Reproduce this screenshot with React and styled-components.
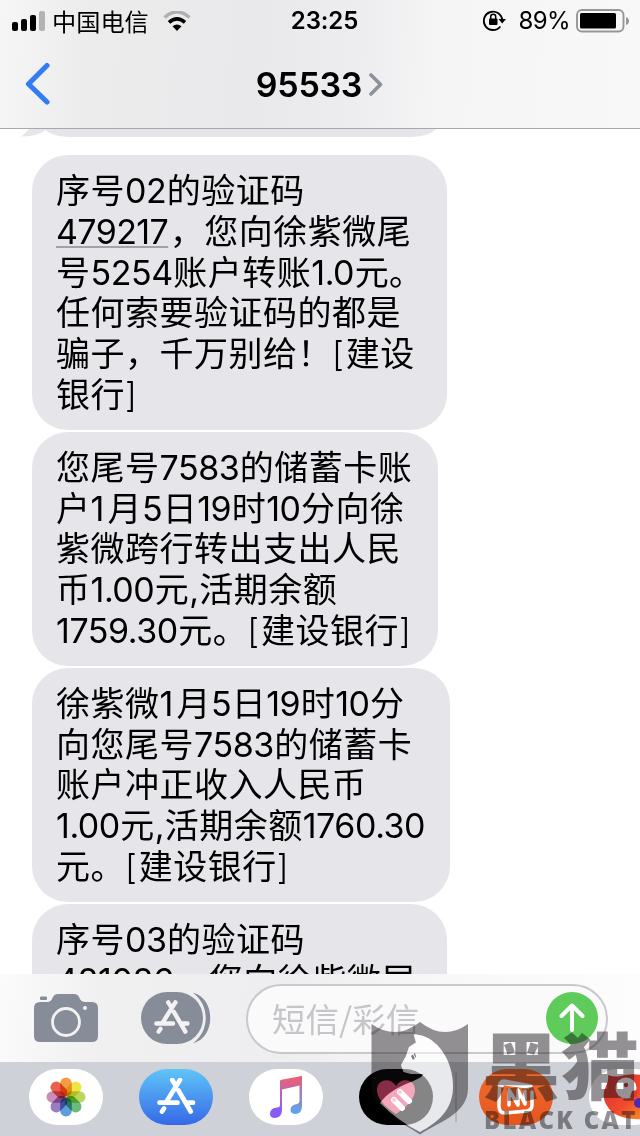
import styled, { createGlobalStyle } from "styled-components";

const BUBBLE = "#e5e5ea";
const BLUE = "#347cf6";
const GREY_ICON = "#868d98";
const MARK = "rgba(18, 14, 18, 0.45)";

const messages = [
  {
    id: 1,
    width: 415,
    lines: ["序号02的验证码", "479217，您向徐紫微尾", "号5254账户转账1.0元。", "任何索要验证码的都是", "骗子，千万别给！[建设", "银行]"],
  },
  {
    id: 2,
    width: 406,
    lines: ["您尾号7583的储蓄卡账", "户1月5日19时10分向徐", "紫微跨行转出支出人民", "币1.00元,活期余额", "1759.30元。[建设银行]"],
  },
  {
    id: 3,
    width: 418,
    lines: ["徐紫微1月5日19时10分", "向您尾号7583的储蓄卡", "账户冲正收入人民币", "1.00元,活期余额1760.30", "元。[建设银行]"],
  },
  {
    id: 4,
    width: 415,
    lines: ["序号03的验证码", "481086，您向徐紫微尾"],
  },
];

const petals = ["#f0922b", "#efe02f", "#b4d34a", "#58b56c", "#4c93d6", "#8f6fb8", "#c77fb0", "#e8503a"];

const TextLine = ({ text }) => (
  <Line>
    {text.split(/([\d.,]+|\[|\])/).filter(Boolean).map((part, i) => {
      if (part === "479217") return <Code key={i}>{part}</Code>;
      if (/[\d.,]/.test(part)) return <Digits key={i} $gap={part === "1" ? 3.5 : 0.5}>{part}</Digits>;
      if (/[[\]]/.test(part)) return <Bracket key={i}>{part}</Bracket>;
      return part;
    })}
  </Line>
);

const StoreGlyph = () => (
  <path
    d="M23 2L9.500 23.500M15.300 2L18.700 7.500M21.500 12.500L33.700 33.500M2.500 24.700H20.500M29 24.700H36M7 30.500L5 33.500"
    fill="none"
    stroke="currentColor"
    strokeWidth="4.700"
    strokeLinecap="round"
  />
);

const App = () => (
  <>
    <GlobalStyle />
    <Screen>
      <Header>
        <StatusBar>
          <Carrier>
            <svg width="34" height="20" viewBox="0 0 34 20">
              <rect x="0" y="11" width="6" height="9" rx="2" />
              <rect x="9" y="8" width="6" height="12" rx="2" />
              <rect x="18" y="4" width="6" height="16" rx="2" />
              <rect x="27" y="0" width="6" height="20" rx="2" fill="#b3b3b4" />
            </svg>
            <CarrierName>中国电信</CarrierName>
            <svg width="28" height="20" viewBox="0 0 28 20">
              <path d="M1.500 6.500Q14-4.500 26.500 6.500" fill="none" stroke="#b0b0b1" strokeWidth="3.600" />
              <path d="M6 11.300Q14 4.300 22 11.300" fill="none" stroke="#000" strokeWidth="3.600" />
              <path d="M9.500 15.300Q14 11.500 18.500 15.300L14 20Z" />
            </svg>
          </Carrier>
          <Clock>23:25</Clock>
          <Battery>
            <svg width="24" height="22" viewBox="0 0 24 22">
              <path d="M17.300 16.500A9.200 9.200 0 1 1 19.200 10" fill="none" stroke="#000" strokeWidth="1.900" />
              <path d="M15.500 9H23L19.200 13.400Z" />
              <rect x="6" y="8.500" width="8.500" height="6.500" rx="1" />
              <path d="M7.700 9V6.800A2.500 2.500 0 0 1 12.700 6.800V9" fill="none" stroke="#000" strokeWidth="1.500" />
            </svg>
            <Percent>89%</Percent>
            <svg width="54" height="24" viewBox="0 0 54 24">
              <rect x="1" y="1" width="46.500" height="21.500" rx="5" fill="none" stroke="#969697" strokeWidth="1.900" />
              <rect x="4" y="4" width="36" height="15.500" rx="1.500" />
              <path d="M50 8Q53 9 53 12Q53 15 50 16Z" fill="#969697" />
            </svg>
          </Battery>
        </StatusBar>
        <NavBar>
          <svg width="26" height="44" viewBox="0 0 26 44">
            <path d="M23 3.500L4.500 22L23 40" fill="none" stroke={BLUE} strokeWidth="5.200" strokeLinecap="round" strokeLinejoin="round" />
          </svg>
          <Contact>
            95533
            <svg width="14" height="23" viewBox="0 0 14 23">
              <path d="M2 2L11.500 11.500L2 21" fill="none" stroke="#8b929b" strokeWidth="3.600" strokeLinecap="round" strokeLinejoin="round" />
            </svg>
          </Contact>
        </NavBar>
      </Header>

      <Messages>
        <Earlier>
          <svg width="426" height="8" viewBox="0 0 426 8">
            <path d="M8 0H415Q407 8 389 8H52Q32 8 24.500 1Q15 8 0 7.500Q5 4 8 0Z" fill={BUBBLE} />
          </svg>
        </Earlier>
        {messages.map((message) => (
          <Bubble key={message.id} $width={message.width}>
            {message.lines.map((line) => (
              <TextLine key={line} text={line} />
            ))}
          </Bubble>
        ))}
      </Messages>

      <Composer>
        <svg width="64" height="48" viewBox="0 0 64 48">
          <rect x="6" y="2.500" width="7" height="3.500" rx="1" fill={GREY_ICON} />
          <path d="M6 8H13Q17 8 18.500 4Q20 0 24 0H40Q44 0 45.500 4Q47 8 51 8H58Q64 8 64 14V42Q64 48 58 48H6Q0 48 0 42V14Q0 8 6 8Z" fill={GREY_ICON} />
          <circle cx="32" cy="28" r="13.500" fill="none" stroke="#f2f2f3" strokeWidth="2.800" />
          <circle cx="51" cy="14" r="2" fill="#f2f2f3" />
        </svg>
        <StoreButton width="71" height="52" viewBox="0 0 71 52">
          <rect x="0" y="0" width="62" height="52" rx="26" fill={GREY_ICON} />
          <path d="M52 .8C75 6 75 46 52 51.200C69 39 69 13 52 .8Z" fill={GREY_ICON} />
          <g color="#f2f2f3" transform="translate(13 8.500) scale(.93)"><StoreGlyph /></g>
        </StoreButton>
        <Field>
          <Placeholder>短信/彩信</Placeholder>
          <Send>
            <svg width="26" height="30" viewBox="0 0 26 30">
              <path d="M13 27V3M2.500 13L13 2.500L23.500 13" fill="none" stroke="#fff" strokeWidth="4" strokeLinecap="round" strokeLinejoin="round" />
            </svg>
          </Send>
        </Field>
      </Composer>

      <Drawer>
        <AppPill $bg="#fff">
          <svg width="40" height="40" viewBox="-20 -20 40 40">
            {petals.map((color, i) => (
              <Petal key={color} x="-5.800" y="-19.500" width="11.600" height="19" rx="5.800" fill={color} transform={`rotate(${i * 45})`} />
            ))}
          </svg>
        </AppPill>
        <AppPill $bg="linear-gradient(#5fc5f7, #3569e8)">
          <svg width="39" height="37" viewBox="0 0 39 37" color="#fff"><StoreGlyph /></svg>
        </AppPill>
        <AppPill $bg="#fff">
          <svg width="34" height="44" viewBox="0 0 34 44">
            <defs>
              <linearGradient id="note" x1="0" y1="0" x2="0" y2="1">
                <stop offset="0" stopColor="#f0606a" />
                <stop offset=".5" stopColor="#b065c8" />
                <stop offset=".8" stopColor="#8b5cf5" />
                <stop offset="1" stopColor="#8b5cf5" />
              </linearGradient>
              <linearGradient id="noteRight" x1="0" y1="0" x2="0" y2="1">
                <stop offset="0" stopColor="#e95b70" />
                <stop offset="1" stopColor="#58a7f8" />
              </linearGradient>
            </defs>
            <path d="M11 6Q11 5 12.500 4.700L33 1V10L13 14.500V35Q13 42 6 43Q1 43 1 39Q1 33 8 32.500Q11 32 11 30Z" fill="url(#note)" />
            <path d="M30.500 1.500L33 1V31Q33 38 27 39Q21.500 39 21.500 35Q21.500 30 28 29Q30.500 28.500 30.500 26Z" fill="url(#noteRight)" />
          </svg>
        </AppPill>
        <AppPill $bg="#000">
          <svg width="40" height="36" viewBox="0 0 40 36">
            <path d="M20 35C14 31 1 22 1 11C1 0 15-2 20 7C25-2 39 0 39 11C39 22 26 31 20 35Z" fill="#e8456f" />
            <path d="M18 21L26 29M24 13L33 22" stroke="#fff" strokeWidth="6" strokeLinecap="round" />
            <circle cx="18" cy="21" r="2" fill="#f29bb3" />
            <circle cx="24" cy="13" r="2" fill="#f29bb3" />
          </svg>
        </AppPill>
        <Divider />
        <AppPill $bg="linear-gradient(#ef6c2e, #e4561f)">
          <svg width="40" height="40" viewBox="0 0 40 40" fill="none" stroke="#fff" strokeWidth="3.500" strokeLinejoin="round" strokeLinecap="round">
            <path d="M35 9L8 4Q4 4 3.500 9L3 29Q3 36 9 36L31 34Q36 33 36 28V15M6 9Q6 6 10 7L32 10" />
            <path d="M13 28V13L22 28V13L29 27V14" strokeWidth="3.500" />
          </svg>
        </AppPill>
        <AppPill $bg="#fff">
          <Flame width="60" height="46" viewBox="0 0 60 46">
            <defs>
              <linearGradient id="flame" x1="0" y1="0" x2="1" y2="1">
                <stop offset="0" stopColor="#df2b34" />
                <stop offset=".55" stopColor="#f04b2c" />
                <stop offset="1" stopColor="#f7a62a" />
              </linearGradient>
            </defs>
            <path d="M5 1Q13 4 22 1Q44-3 52 12V43Q28 49 10 39Q-4 26 3 12Q6 7 5 1Z" fill="url(#flame)" />
            <circle cx="23" cy="14" r="10.500" fill="#fff" />
            <circle cx="23" cy="11" r="2.200" fill="#d8333a" />
            <path d="M27 23L29 17L34 16V23Z" fill="#de3c37" />
            <circle cx="36" cy="29" r="5" fill="#4b2bb5" />
          </Flame>
        </AppPill>
      </Drawer>

      <Watermark>
        <svg width="98" height="114" viewBox="371 1022 98 114">
          <path
            d="M371.500 1024Q396 1041 420 1022Q444 1041 468 1024V1088C468 1114 440 1121 420 1134.500C402 1122 371.500 1111 371.500 1084ZM413.500 1034L416 1042.500L409 1047L406 1056L401 1065L403.500 1072L411 1074L423.500 1074C420 1082 395 1083 380 1103Q398 1121 420 1132C438 1122 453 1110 453 1086C453 1060 437 1038 419 1035Z"
            fill={MARK}
            fillRule="evenodd"
          />
          <path d="M413.500 1034L416 1042.500L409 1047L406 1056L401 1065L403.500 1072L411 1074L423.500 1074C420 1082 395 1083 380 1103Q398 1121 420 1132C438 1122 453 1110 453 1086C453 1060 437 1038 419 1035Z" fill="rgba(255,255,255,.52)" />
          <path d="M411 1056L415 1053L416 1057L413 1060Z" fill="#77777b" />
          <path d="M413 1053.500L415 1058" stroke="#fff" strokeWidth="1" />
        </svg>
        <Brand>
          <BrandName>黑猫</BrandName>
          <BrandLatin>BLACK CAT</BrandLatin>
        </Brand>
      </Watermark>
    </Screen>
  </>
);

export default App;

const GlobalStyle = createGlobalStyle`
  body {
    margin: 0;
    background: #fff;
    color: #000;
    font-family: "Inter", "Noto Sans CJK SC", sans-serif;
  }
  svg {
    display: block;
    flex: none;
  }
`;

const Screen = styled.div`
  position: relative;
  display: flex;
  flex-direction: column;
  width: 640px;
  height: 1136px;
  overflow: hidden;
`;

const Header = styled.header`
  box-sizing: border-box;
  height: 129px;
  flex: none;
  border-bottom: 1px solid #a9a9ad;
  background: linear-gradient(93deg, #f6f6f6 0%, #ececed 14%, #e9e9eb 40%, #ededef 56%, #f5f5f6 68%, #f8f8f8 100%);
`;

const StatusBar = styled.div`
  display: grid;
  grid-template-columns: 1fr auto 1fr;
  align-items: center;
  height: 40px;
  padding: 0 10px 0 12px;
`;

const Carrier = styled.div`
  display: flex;
  align-items: center;
`;

const CarrierName = styled.span`
  margin: 0 14px 0 6px;
  font: 400 24.200px/40px "Noto Sans CJK SC", sans-serif;
`;

const Clock = styled.span`
  padding: 1px 0 0 7px;
  font-size: 24px;
  font-weight: 600;
  line-height: 40px;
  letter-spacing: -0.1px;
`;

const Battery = styled.div`
  display: flex;
  align-items: center;
  justify-content: flex-end;
  padding-top: 1px;
`;

const Percent = styled.span`
  margin: 0 6px 0 12px;
  font-size: 24px;
  line-height: 40px;
  letter-spacing: -0.6px;
`;

const NavBar = styled.div`
  display: grid;
  grid-template-columns: 26px 1fr 26px;
  align-items: center;
  height: 88px;
  padding: 0 25px 0 24px;
`;

const Contact = styled.div`
  display: flex;
  align-items: center;
  justify-content: center;
  gap: 7px;
  font-size: 34px;
  font-weight: 600;
  letter-spacing: -0.3px;
`;

const Messages = styled.main`
  display: flex;
  flex: 1;
  flex-direction: column;
  gap: 2px;
  min-height: 0;
  padding-left: 32px;
  overflow: hidden;
`;

const Earlier = styled.div`
  flex: none;
  height: 8px;
  margin: 0 0 16px -11px;
`;

const Bubble = styled.div`
  box-sizing: border-box;
  flex: none;
  width: ${(props) => props.$width}px;
  padding: 14px 0 16px 24px;
  border-radius: 36px;
  background: ${BUBBLE};
`;

const Line = styled.div`
  height: 40.800px;
  font: 400 34px/40.800px "Noto Sans CJK SC", sans-serif;
  letter-spacing: 0.500px;
  white-space: nowrap;
`;

const Digits = styled.span`
  margin-right: ${(props) => props.$gap || 0}px;
  font-family: "Inter", sans-serif;
  font-weight: 400;
  letter-spacing: -0.450px;
`;

const Code = styled(Digits)`
  margin-right: 1.500px;
  letter-spacing: -0.600px;
  text-decoration: underline #a2a2a7 2px;
  text-underline-offset: 2px;
`;

const Bracket = styled(Digits)`
  font-weight: 300;
  letter-spacing: 1.800px;
`;

const Composer = styled.div`
  display: flex;
  align-items: center;
  flex: none;
  box-sizing: border-box;
  height: 88px;
  padding: 0 32px 0 34px;
  background: linear-gradient(95deg, #fbfbfb 0%, #f0f0f1 16%, #eeeef0 45%, #f8f8f8 68%, #fdfdfd 100%);
`;

const StoreButton = styled.svg`
  margin: 0 34px 0 43px;
`;

const Field = styled.div`
  display: flex;
  align-items: center;
  justify-content: space-between;
  flex: 1;
  box-sizing: border-box;
  height: 70px;
  margin-top: 1px;
  padding: 0 8px 2px 24px;
  border: 2px solid #c8c8cd;
  border-radius: 35px;
  background: #fafafa;
`;

const Placeholder = styled.span`
  color: #c5c5ca;
  font: 400 33.500px/50px "Noto Sans CJK SC", sans-serif;
`;

const Send = styled.div`
  display: grid;
  place-items: center;
  width: 52px;
  height: 52px;
  border-radius: 50%;
  background: #5ecb5a;
`;

const Drawer = styled.div`
  display: flex;
  align-items: flex-start;
  flex: none;
  gap: 36px;
  box-sizing: border-box;
  height: 74px;
  padding: 6.500px 0 0 29px;
  background: #cfd1d8;
`;

const AppPill = styled.div`
  display: grid;
  place-items: center;
  flex: none;
  width: 74px;
  height: 56px;
  border-radius: 28px;
  background: ${(props) => props.$bg};
`;

const Petal = styled.rect`
  mix-blend-mode: multiply;
  opacity: 0.9;
`;

const Flame = styled.svg`
  margin-left: 14px;
`;

const Divider = styled.div`
  flex: none;
  width: 2px;
  height: 50px;
  margin: 3px -14px 0;
  background: #b5b6bd;
`;

const Watermark = styled.div`
  position: absolute;
  top: 1022px;
  left: 371px;
  display: flex;
  gap: 13px;
`;

const Brand = styled.div`
  color: ${MARK};
  white-space: nowrap;
`;

const BrandName = styled.div`
  height: 86px;
  font: 900 78px/80px "Noto Sans CJK SC", sans-serif;
  letter-spacing: 1px;
  transform: scaleY(0.93);
`;

const BrandLatin = styled.div`
  padding-left: 2px;
  font: 800 24px/24px "Open Sans", sans-serif;
  letter-spacing: 2.300px;
`;
